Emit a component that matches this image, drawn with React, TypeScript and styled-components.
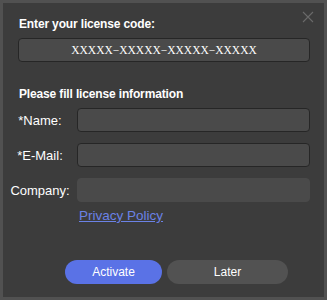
import React from "react";
import styled, { createGlobalStyle } from "styled-components";

const Global = createGlobalStyle`
  html, body { margin: 0; padding: 0; background: #ffffff; }
  body { font-family: "Liberation Sans", Arial, sans-serif; }
`;

const Dialog = styled.div`
  position: relative;
  box-sizing: border-box;
  width: 327px;
  height: 300px;
  background: #3c3c3c;
  border: 3px solid #515151;
  padding: 13px 14px 0 15px;
  color: #ffffff;
  display: flex;
  flex-direction: column;
`;

const Close = styled.button`
  position: absolute;
  top: 8px;
  right: 10px;
  width: 12px;
  height: 12px;
  padding: 0;
  border: none;
  background: none;
  cursor: pointer;
  display: flex;
`;

const Heading = styled.div`
  font-weight: bold;
  font-size: 12px;
  line-height: 16px;
  letter-spacing: -0.15px;
  margin-left: 1px;
`;

const CodeInput = styled.input`
  box-sizing: border-box;
  width: 292px;
  height: 24px;
  margin-top: 6px;
  background: #4a4a4a;
  border: 1px solid #262626;
  border-radius: 4px;
  color: #ffffff;
  text-align: center;
  font-family: "Liberation Serif", "Times New Roman", serif;
  font-size: 11.5px;
  outline: none;
  &::placeholder { color: #ffffff; opacity: 1; }
`;

const Section = styled(Heading)`
  margin-top: 24px;
`;

const Form = styled.div`
  display: flex;
  flex-direction: column;
  gap: 11px;
  margin-top: 6px;
  margin-left: -15px;
`;

const Row = styled.div`
  display: flex;
  align-items: center;
`;

const Label = styled.label`
  width: 74px;
  flex: none;
  text-align: center;
  font-size: 13px;
  color: #ffffff;
`;

const Field = styled.input<{ $plain?: boolean }>`
  box-sizing: border-box;
  width: 233px;
  height: 24px;
  background: #4a4a4a;
  border: 1px solid ${(p) => (p.$plain ? "#4a4a4a" : "#262626")};
  border-radius: 4px;
  color: #ffffff;
  outline: none;
  font-size: 12px;
`;

const Link = styled.a`
  margin-left: 61px;
  margin-top: 6px;
  font-size: 13.5px;
  line-height: 16px;
  color: #6b82e6;
  text-decoration: underline;
  width: fit-content;
`;

const Buttons = styled.div`
  display: flex;
  gap: 5px;
  margin-top: 36px;
  margin-left: 47px;
`;

const Btn = styled.button<{ $primary?: boolean }>`
  height: 24px;
  width: ${(p) => (p.$primary ? "97px" : "121px")};
  border: none;
  border-radius: 12px;
  background: ${(p) => (p.$primary ? "#5a72e6" : "#525252")};
  color: #ffffff;
  font-family: "Liberation Sans", Arial, sans-serif;
  font-size: 12px;
  padding: 0;
  cursor: pointer;
`;

export default function App() {
  return (
    <>
      <Global />
      <Dialog>
        <Close aria-label="close">
          <svg width="12" height="12" viewBox="0 0 12 12">
            <path d="M1 1 L11 11 M11 1 L1 11" stroke="#6a6a6a" strokeWidth="1.1" />
          </svg>
        </Close>
        <Heading>Enter your license code:</Heading>
        <CodeInput placeholder="XXXXX−XXXXX−XXXXX−XXXXX" />
        <Section>Please fill license information</Section>
        <Form>
          <Row>
            <Label>*Name:</Label>
            <Field />
          </Row>
          <Row>
            <Label>*E-Mail:</Label>
            <Field />
          </Row>
          <Row>
            <Label>Company:</Label>
            <Field $plain />
          </Row>
        </Form>
        <Link href="#">Privacy Policy</Link>
        <Buttons>
          <Btn $primary>Activate</Btn>
          <Btn>Later</Btn>
        </Buttons>
      </Dialog>
    </>
  );
}
